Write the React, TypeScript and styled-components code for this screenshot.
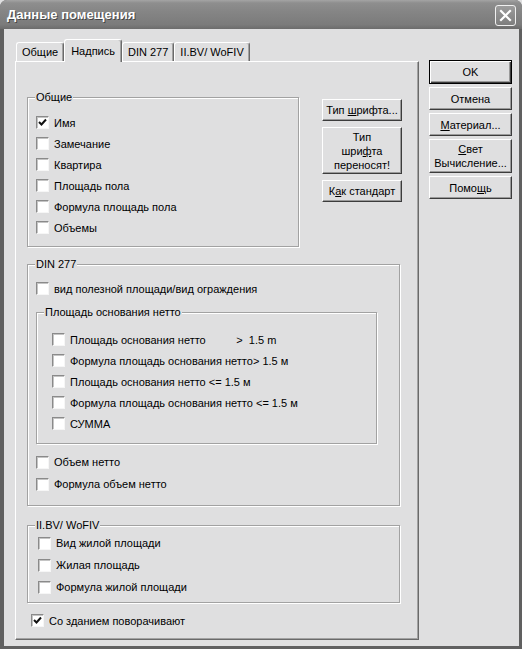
import React from 'react';
import styled, { createGlobalStyle } from 'styled-components';

const GlobalStyle = createGlobalStyle`
  html, body {
    margin: 0;
    padding: 0;
    background: #dfdfe0;
  }
  body {
    font-family: "Liberation Sans", Arial, sans-serif;
    font-size: 11px;
    color: #000;
  }
`;

const FACE = '#dfdfe0';

const Window = styled.div`
  width: 522px;
  height: 649px;
  display: flex;
  flex-direction: column;
  background: #606060;
  border-radius: 7px 7px 0 0;
  overflow: hidden;
`;

const TitleBar = styled.div`
  flex: none;
  height: 29px;
  box-sizing: border-box;
  display: flex;
  align-items: center;
  justify-content: space-between;
  padding: 0 6px 0 7px;
  background: linear-gradient(#a4a4a4 0, #8e8e8e 3px, #858585 40%, #7b7b7b 85%, #6c6c6c 100%);
`;

const Title = styled.span`
  color: #fff;
  font-weight: bold;
  font-size: 13px;
  text-shadow: 1px 1px 0 #454545;
`;

const CloseButton = styled.div`
  width: 21px;
  height: 21px;
  box-sizing: border-box;
  margin-top: 2px;
  border: 1px solid #f0f0f0;
  border-radius: 3px;
  background: linear-gradient(#9c9c9c, #7e7e7e);
  display: flex;
  align-items: center;
  justify-content: center;
`;

const Body = styled.div`
  flex: 1;
  margin: 0 3px 3px 4px;
  background: ${FACE};
  display: flex;
  padding: 10px 0 6px 11px;
  box-sizing: border-box;
`;

const LeftColumn = styled.div`
  width: 404px;
  display: flex;
  flex-direction: column;
`;

const TabStrip = styled.div`
  display: flex;
  align-items: flex-end;
  height: 22px;
  padding-left: 1px;
`;

const Tab = styled.div<{ $active?: boolean }>`
  position: relative;
  z-index: ${p => (p.$active ? 1 : 0)};
  height: ${p => (p.$active ? 23 : 19)}px;
  margin-bottom: ${p => (p.$active ? -1 : 0)}px;
  box-sizing: border-box;
  padding: ${p => (p.$active ? '4px 6px 0' : '2px 5px 0')};
  background: ${FACE};
  border-top: 1px solid #fff;
  border-left: 1px solid #fff;
  border-right: 1px solid #6a6a6a;
  border-radius: 3px 3px 0 0;
  box-shadow: inset -1px 0 0 #a2a2a2;
  line-height: 15px;
  white-space: nowrap;
`;

const Panel = styled.div`
  flex: 1;
  display: flex;
  flex-direction: column;
  align-items: flex-start;
  border-top: 1px solid #fff;
  border-left: 1px solid #fff;
  border-right: 1px solid #6a6a6a;
  border-bottom: 1px solid #6a6a6a;
  box-shadow: inset -1px -1px 0 #a2a2a2;
  padding: 29px 0 0 11px;
`;

const TopRow = styled.div`
  display: flex;
  align-items: flex-start;
`;

const Group = styled.fieldset<{ $width: number; $mt?: number; $ml?: number }>`
  width: ${p => p.$width}px;
  box-sizing: border-box;
  min-width: 0;
  margin: ${p => p.$mt ?? 0}px 0 0 ${p => p.$ml ?? 0}px;
  padding: 0;
  border: 1px solid #a2a2a2;
  box-shadow: inset 1px 1px 0 #fff, 1px 1px 0 #fff;
`;

const Legend = styled.legend`
  margin-left: 7px;
  padding: 0 1px;
  line-height: 13px;
  background: ${FACE};
`;

const Items = styled.div<{ $pt: number; $pb: number; $pl: number }>`
  display: flex;
  flex-direction: column;
  align-items: flex-start;
  padding: ${p => p.$pt}px 0 ${p => p.$pb}px ${p => p.$pl}px;
`;

const Row = styled.label<{ $h?: number; $mt?: number; $ml?: number }>`
  display: flex;
  align-items: center;
  height: ${p => p.$h ?? 21}px;
  margin: ${p => p.$mt ?? 0}px 0 0 ${p => p.$ml ?? 0}px;
  white-space: pre;
`;

const Box = styled.span`
  flex: none;
  width: 13px;
  height: 13px;
  box-sizing: border-box;
  border: 1px solid;
  border-color: #8a8a8a #f6f6f6 #f6f6f6 #8a8a8a;
  box-shadow: inset 1px 1px 0 #c4c4c4;
  background: #fff;
  display: flex;
  align-items: center;
  justify-content: center;
  margin-right: 5px;
`;

const SideButtons = styled.div`
  display: flex;
  flex-direction: column;
  gap: 6px;
  width: 80px;
  margin: 8px 0 0 23px;
`;

const Button = styled.div<{ $h?: number; $default?: boolean }>`
  height: ${p => p.$h ?? 23}px;
  box-sizing: border-box;
  display: flex;
  align-items: center;
  justify-content: center;
  text-align: center;
  line-height: 14px;
  background: ${FACE};
  border: 1px solid;
  border-color: ${p => (p.$default ? '#000' : '#fff #3c3c3c #3c3c3c #fff')};
  box-shadow: ${p =>
    p.$default
      ? 'inset 1px 1px 0 #fff, inset -1px -1px 0 #3c3c3c, inset -2px -2px 0 #9a9a9a'
      : 'inset -1px -1px 0 #9a9a9a'};
`;

const RightColumn = styled.div`
  width: 83px;
  margin: 21px 0 0 10px;
  display: flex;
  flex-direction: column;
  gap: 3px;
`;

const Check: React.FC<{ checked?: boolean }> = ({ checked }) => (
  <Box>
    {checked && (
      <svg width="9" height="9" viewBox="0 0 9 9">
        <path d="M1 4 L3.5 6.5 L8 1.5" fill="none" stroke="#111" strokeWidth="2" />
      </svg>
    )}
  </Box>
);

const Item: React.FC<{ text: string; checked?: boolean; h?: number; mt?: number; ml?: number }> = ({
  text, checked, h, mt, ml,
}) => (
  <Row $h={h} $mt={mt} $ml={ml}>
    <Check checked={checked} />
    {text}
  </Row>
);

const general = ['Замечание', 'Квартира', 'Площадь пола', 'Формула площадь пола', 'Объемы'];

const netArea = [
  'Площадь основания нетто          >  1.5 m',
  'Формула площадь основания нетто> 1.5 м',
  'Площадь основания нетто <= 1.5 м',
  'Формула площадь основания нетто <= 1.5 м',
  'СУММА',
];

const living = ['Вид жилой площади', 'Жилая площадь', 'Формула жилой площади'];

export default function App() {
  return (
    <>
      <GlobalStyle />
      <Window>
        <TitleBar>
          <Title>Данные помещения</Title>
          <CloseButton>
            <svg width="13" height="13" viewBox="0 0 13 13">
              <path d="M2 2 L11 11 M11 2 L2 11" stroke="#fff" strokeWidth="2.2" strokeLinecap="square" />
            </svg>
          </CloseButton>
        </TitleBar>
        <Body>
          <LeftColumn>
            <TabStrip>
              <Tab>Общие</Tab>
              <Tab $active>Надпись</Tab>
              <Tab>DIN 277</Tab>
              <Tab>II.BV/ WoFIV</Tab>
            </TabStrip>
            <Panel>
              <TopRow>
                <Group $width={272}>
                  <Legend>Общие</Legend>
                  <Items $pt={8} $pb={8} $pl={8}>
                    <Item text="Имя" checked />
                    {general.map(t => <Item key={t} text={t} />)}
                  </Items>
                </Group>
                <SideButtons>
                  <Button $h={22}><span>Тип <u>ш</u>рифта...</span></Button>
                  <Button $h={47}><span>Тип<br />шри<u>ф</u>та<br />переносят!</span></Button>
                  <Button $h={22}><span>К<u>а</u>к стандарт</span></Button>
                </SideButtons>
              </TopRow>

              <Group $width={373} $mt={11}>
                <Legend>DIN 277</Legend>
                <Items $pt={7} $pb={10} $pl={8}>
                  <Item text="вид полезной площади/вид ограждения" />
                  <Group $width={341} $mt={7}>
                    <Legend>Площадь основания нетто</Legend>
                    <Items $pt={10} $pb={9} $pl={15}>
                      {netArea.map(t => <Item key={t} text={t} />)}
                    </Items>
                  </Group>
                  <Item text="Объем нетто" h={22} mt={7} />
                  <Item text="Формула объем нетто" h={22} />
                </Items>
              </Group>

              <Group $width={373} $mt={13}>
                <Legend>II.BV/ WoFIV</Legend>
                <Items $pt={0} $pb={4} $pl={10}>
                  {living.map(t => <Item key={t} text={t} h={22} />)}
                </Items>
              </Group>

              <Item text="Со зданием поворачивают" checked mt={7} ml={4} />
            </Panel>
          </LeftColumn>
          <RightColumn>
            <Button $h={24} $default><span>OK</span></Button>
            <Button><span>Отмена</span></Button>
            <Button><span><u>М</u>атериал...</span></Button>
            <Button $h={34}><span><u>С</u>вет<br />Вычисление...</span></Button>
            <Button><span>Помо<u>щ</u>ь</span></Button>
          </RightColumn>
        </Body>
      </Window>
    </>
  );
}
